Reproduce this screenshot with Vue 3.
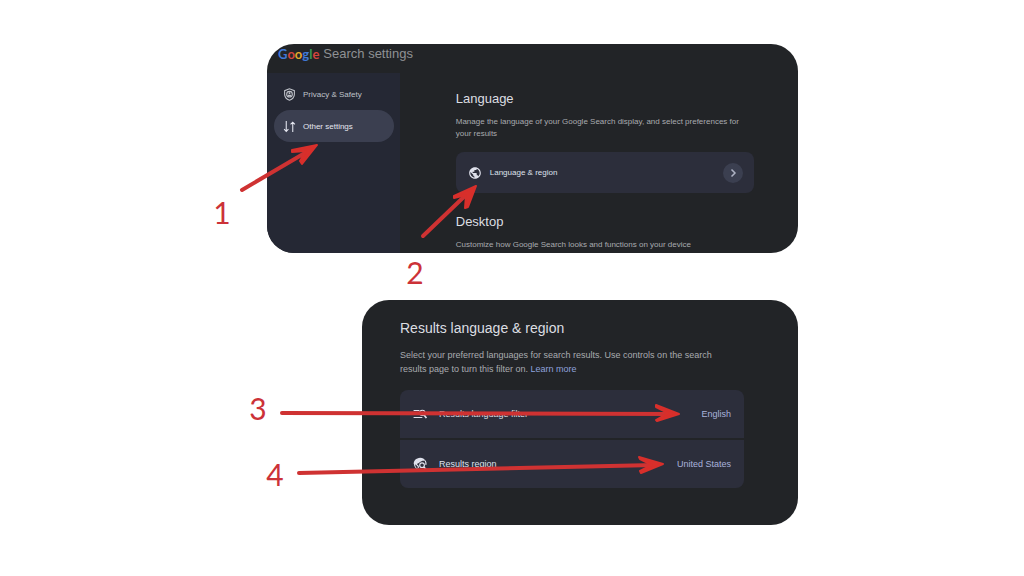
<script setup>
const logo = [
  { c: 'G', tone: 'blue' },
  { c: 'o', tone: 'red' },
  { c: 'o', tone: 'yellow' },
  { c: 'g', tone: 'blue' },
  { c: 'l', tone: 'green' },
  { c: 'e', tone: 'red' }
]
</script>

<template>
  <main class="guide">
    <section class="panel settings">
      <header class="brand">
        <span class="logo"><span v-for="(l, i) in logo" :key="i" :class="l.tone">{{ l.c }}</span></span>
        <span class="product">Search settings</span>
      </header>
      <div class="body">
        <nav class="side">
          <a class="nav" href="#privacy">
            <svg class="ico" viewBox="0 0 24 24" fill="none" stroke="currentColor" stroke-width="2">
              <path d="M12 1.500 3 5v6.500c0 5.300 3.800 9.300 9 11 5.200-1.700 9-5.700 9-11V5z" />
              <circle cx="12" cy="11.500" r="5.200" />
              <path d="M12 8v3M9 14h6" stroke-width="3" />
            </svg>
            Privacy &amp; Safety
          </a>
          <a class="nav active" href="#other">
            <svg class="ico" viewBox="0 0 24 24" fill="none" stroke="currentColor" stroke-width="2">
              <path d="M6 2v19M2 17l4 4 4-4M18 22V4M14 8l4-4 4 4" />
            </svg>
            Other settings
          </a>
        </nav>
        <div class="content">
          <h2>Language</h2>
          <p>Manage the language of your Google Search display, and select preferences for your results</p>
          <button class="row" type="button">
            <svg class="globe" viewBox="0 0 24 24">
              <path fill="currentColor" d="M12 2C6.480 2 2 6.480 2 12s4.480 10 10 10 10-4.480 10-10S17.520 2 12 2zm-1 17.930c-3.950-.490-7-3.850-7-7.930 0-.620.080-1.210.210-1.790L9 15v1c0 1.100.900 2 2 2v1.930zm6.900-2.540c-.260-.810-1-1.390-1.900-1.390h-1v-3c0-.550-.450-1-1-1H8v-2h2c.550 0 1-.450 1-1V7h2c1.100 0 2-.900 2-2v-.410c2.930 1.190 5 4.060 5 7.410 0 2.080-.800 3.970-2.100 5.390z" />
            </svg>
            <span class="label">Language &amp; region</span>
            <span class="go">
              <svg viewBox="0 0 12 12" fill="none" stroke="currentColor" stroke-width="1.500"><path d="M4.500 2.500 8 6 4.500 9.500" /></svg>
            </span>
          </button>
          <h2>Desktop</h2>
          <p>Customize how Google Search looks and functions on your device</p>
        </div>
      </div>
    </section>

    <section class="panel results">
      <h2>Results language &amp; region</h2>
      <p>Select your preferred languages for search results. Use controls on the search results page to turn this filter on. <a href="#learn">Learn more</a></p>
      <div class="options">
        <button class="option" type="button">
          <svg class="globe" viewBox="0 0 24 24" fill="none" stroke="currentColor" stroke-width="2">
            <path d="M1 6h10M1 11h8M1 18h15" />
            <circle cx="16" cy="10" r="4.500" />
            <path d="m18.500 13 4.500 6" stroke-width="3" />
          </svg>
          <span class="label">Results language filter</span>
          <span class="value">English</span>
        </button>
        <button class="option" type="button">
          <svg class="globe" viewBox="0 0 24 24" fill="none" stroke="currentColor" stroke-width="2">
            <path fill="currentColor" stroke="none" d="M1 11A11 11 0 0 1 21.500 7C18 5.500 14 6.500 11.500 9 10.500 10.500 8 10.500 7 12L3 13z" />
            <path d="M2.500 11c0 6.500 4.500 10.500 10 10.500M4 11l5 5v3M21 6.500c1 2 1.500 4 1 7" />
            <circle cx="15.500" cy="14" r="4" />
            <path d="m18 17 4.500 4.500" stroke-width="3" />
          </svg>
          <span class="label">Results region</span>
          <span class="value">United States</span>
        </button>
      </div>
    </section>

    <svg class="marks" viewBox="0 0 1024 576">
      <g class="arrows">
        <path d="M242 190 310 150" />
        <path class="head" d="M317 145 292 150 292 152 306 151 300 161 302 164z" />
        <path d="M423 236 469 192" />
        <path class="head" d="M476 186 454 196 454 198 466 195 465 208 468 207z" />
        <path d="M282 413 670 414" />
        <path class="head" d="M679 414 656 405 656 407 668 413 656 420 657 421z" />
        <path d="M299 473 655 465" />
        <path class="head" d="M663 464 639 457 640 459 652 465 640 471 641 473z" />
      </g>
      <g class="numbers">
        <text x="222" y="224">1</text>
        <text x="415" y="284">2</text>
        <text x="258" y="420">3</text>
        <text x="275" y="486">4</text>
      </g>
    </svg>
  </main>
</template>

<style>
body {
  background: #fff;
}
</style>

<style scoped>
.guide {
  position: relative;
  display: grid;
  grid-template-columns: minmax(0, 267fr) minmax(0, 95fr) minmax(0, 436fr) minmax(0, 226fr);
  row-gap: 47px;
  padding: 44px 0 51px;
  font-family: "Liberation Sans", Arial, sans-serif;
  color: #dcdee2;
}
.panel {
  background: #222427;
  border-radius: 27px;
  overflow: hidden;
}
.settings {
  grid-column: 2 / 4;
}
.results {
  grid-column: 3;
  padding: 18px 54px 37px 38px;
}
.brand {
  display: flex;
  align-items: center;
  gap: 4px;
  height: 20px;
  padding: 0 11px 9px;
  line-height: 20px;
}
.logo {
  font-family: Lato, sans-serif;
  font-size: 13px;
  font-weight: 700;
}
.blue { color: #4079d8; }
.red { color: #d4453d; }
.yellow { color: #e0a92a; }
.green { color: #3a9a55; }
.product {
  font-size: 13px;
  color: #8f9194;
}
.body {
  display: flex;
  align-items: stretch;
}
.side {
  flex: 0 0 25%;
  box-sizing: border-box;
  padding: 5px 6px 0 7px;
  background: #252834;
}
.nav {
  display: flex;
  align-items: center;
  gap: 7px;
  height: 32px;
  padding-left: 9px;
  border-radius: 16px;
  font-size: 8px;
  color: #bfc2c9;
  text-decoration: none;
}
.nav.active {
  background: #3b3f50;
  color: #e4e6ef;
}
.ico {
  width: 13px;
  height: 13px;
}
.content {
  flex: 1;
  min-width: 0;
  padding: 17px 44px 2px 56px;
}
h2 {
  margin: 0;
  font-size: 13px;
  line-height: 18px;
  font-weight: 400;
}
p {
  margin: 8px 0 0;
  font-size: 8px;
  line-height: 12px;
  color: #a9abaf;
}
.content > p {
  max-width: 288px;
}
.row,
.option {
  display: flex;
  align-items: center;
  width: 100%;
  border: 0;
  background: #2c2e3b;
  font-family: inherit;
  color: #dfe1ec;
  text-align: left;
}
.row {
  height: 41px;
  margin: 12px 0 20px;
  padding: 0 11px 0 12px;
  border-radius: 8px;
  font-size: 8px;
}
.globe {
  width: 14px;
  height: 14px;
  flex: none;
}
.label {
  flex: 1;
  margin-left: 8px;
}
.go {
  display: grid;
  place-items: center;
  width: 20px;
  height: 20px;
  border-radius: 50%;
  background: #3b3f50;
  color: #aeb3c4;
}
.go svg {
  width: 12px;
  height: 12px;
}
.results h2 {
  font-size: 14px;
  line-height: 20px;
}
.results p {
  max-width: 330px;
  margin-top: 10px;
  font-size: 9px;
  line-height: 14px;
}
.results a {
  color: #8ea2dc;
  text-decoration: none;
}
.options {
  display: grid;
  gap: 2px;
  margin-top: 14px;
  border-radius: 8px;
  overflow: hidden;
}
.option {
  height: 48px;
  padding: 0 13px;
  font-size: 9px;
}
.option .label {
  margin-left: 12px;
}
.value {
  color: #a9b2dc;
}
.marks {
  position: absolute;
  top: 0;
  left: 0;
  width: 100%;
  height: auto;
  pointer-events: none;
}
.arrows path {
  fill: none;
  stroke: #cf3232;
  stroke-width: 4;
  stroke-linecap: round;
  stroke-linejoin: round;
}
.arrows .head {
  fill: #d82f2b;
  stroke: #d82f2b;
  stroke-width: 2;
}
.numbers text {
  font-family: Lato, sans-serif;
  font-size: 30px;
  text-anchor: middle;
  fill: #cc3238;
}
</style>
